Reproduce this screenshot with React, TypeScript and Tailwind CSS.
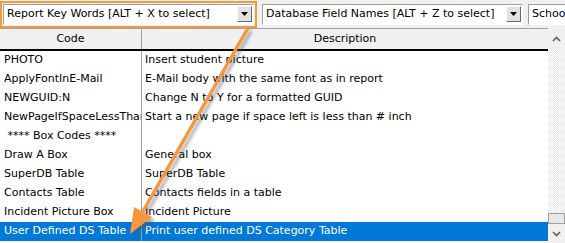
import React from "react";

const rows: { code: string; desc: string; sel?: boolean }[] = [
  { code: "PHOTO", desc: "Insert student picture" },
  { code: "ApplyFontInE-Mail", desc: "E-Mail body with the same font as in report" },
  { code: "NEWGUID:N", desc: "Change N to Y for a formatted GUID" },
  { code: "NewPageIfSpaceLessThan", desc: "Start a new page if space left is less than # inch" },
  { code: "\u00a0**** Box Codes ****", desc: "" },
  { code: "Draw A Box", desc: "General box" },
  { code: "SuperDB Table", desc: "SuperDB Table" },
  { code: "Contacts Table", desc: "Contacts fields in a table" },
  { code: "Incident Picture Box", desc: "Incident Picture" },
  { code: "User Defined DS Table", desc: "Print user defined DS Category Table", sel: true },
];

function DropBtn() {
  return (
    <div className="w-[15px] h-[16px] bg-[#e1e1e1] border border-t-white border-l-white border-r-[#696969] border-b-[#696969] flex items-center justify-center shrink-0">
      <svg width="7" height="4" viewBox="0 0 7 4">
        <path d="M0 0H7L3.5 4Z" fill="#000" />
      </svg>
    </div>
  );
}

function Combo({ text, className }: { text: string; className: string }) {
  return (
    <div
      className={`h-[21px] bg-white border border-t-[#a0a0a0] border-l-[#a0a0a0] border-r-white border-b-white flex items-center pl-[3px] pr-[1px] overflow-hidden ${className}`}
    >
      <span className="flex-1 whitespace-nowrap overflow-hidden">{text}</span>
      <DropBtn />
    </div>
  );
}

export default function App() {
  return (
    <div
      className="relative w-[565px] h-[243px] bg-white overflow-hidden text-[11px] text-black"
      style={{ fontFamily: "'DejaVu Sans', sans-serif" }}
    >
      {/* toolbar */}
      <div className="h-[28px] bg-[#f0f0f0] flex items-center gap-[5px]">
        <div className="h-[27px] w-[257px] border-2 border-[#f39a3e] flex items-center pl-px pr-px shrink-0">
          <Combo text="Report Key Words [ALT + X to select]" className="w-full" />
        </div>
        <Combo text="Database Field Names [ALT + Z to select]" className="w-[261px] shrink-0" />
        <Combo text="School" className="w-[60px] shrink-0" />
      </div>
      {/* grid */}
      <div className="flex h-[215px]">
        <div className="w-[548px] flex flex-col">
          <div className="h-[23px] flex bg-[#f0f0f0] border-t border-[#a0a0a0] border-b-2 border-b-black">
            <div className="w-[142px] border-r border-[#a0a0a0] flex items-center justify-center">Code</div>
            <div className="flex-1 flex items-center justify-center">Description</div>
          </div>
          {rows.map((r, i) => (
            <div
              key={i}
              className={`h-[19px] flex ${r.sel ? "bg-[#0078d7] text-white" : ""}`}
            >
              <div className="w-[142px] border-r border-[#a0a0a0] pl-[4px] flex items-center whitespace-nowrap overflow-hidden">
                {r.code}
              </div>
              <div className="flex-1 pl-[3px] flex items-center whitespace-nowrap overflow-hidden">{r.desc}</div>
            </div>
          ))}
        </div>
        {/* scrollbar */}
        <div className="w-[17px] flex flex-col bg-[#f0f0f0]">
          <div className="h-[22px] flex items-center justify-center">
            <svg width="9" height="6" viewBox="0 0 9 6">
              <path d="M1 5L4.5 1.5L8 5" stroke="#606060" strokeWidth="1.6" fill="none" />
            </svg>
          </div>
          <div className="flex-1 bg-[repeating-conic-gradient(#e8e8e8_0_25%,#ffffff_0_50%)] bg-[length:2px_2px]" />
          <div className="h-[11px] bg-[#e8e8e8] border border-[#a0a0a0]" />
          <div className="h-[19px] flex items-center justify-center bg-[#f0f0f0]">
            <svg width="9" height="6" viewBox="0 0 9 6">
              <path d="M1 1L4.5 4.5L8 1" stroke="#606060" strokeWidth="1.6" fill="none" />
            </svg>
          </div>
        </div>
      </div>
      {/* arrow overlay */}
      <svg className="absolute left-0 top-0 pointer-events-none" width="565" height="243">
        <defs>
          <filter id="sh" x="-20%" y="-20%" width="140%" height="140%">
            <feGaussianBlur stdDeviation="1.5" />
          </filter>
        </defs>
        <g transform="translate(3,3)" filter="url(#sh)" opacity="0.45">
          <path d="M248 28L142 213" stroke="#555" strokeWidth="3.5" />
          <path d="M130 234L134 207L152 217Z" fill="#555" />
        </g>
        <path d="M248 28L142 213" stroke="#f7963f" strokeWidth="3.5" />
        <path d="M130 234L134 207L152 217Z" fill="#f7963f" />
      </svg>
    </div>
  );
}
